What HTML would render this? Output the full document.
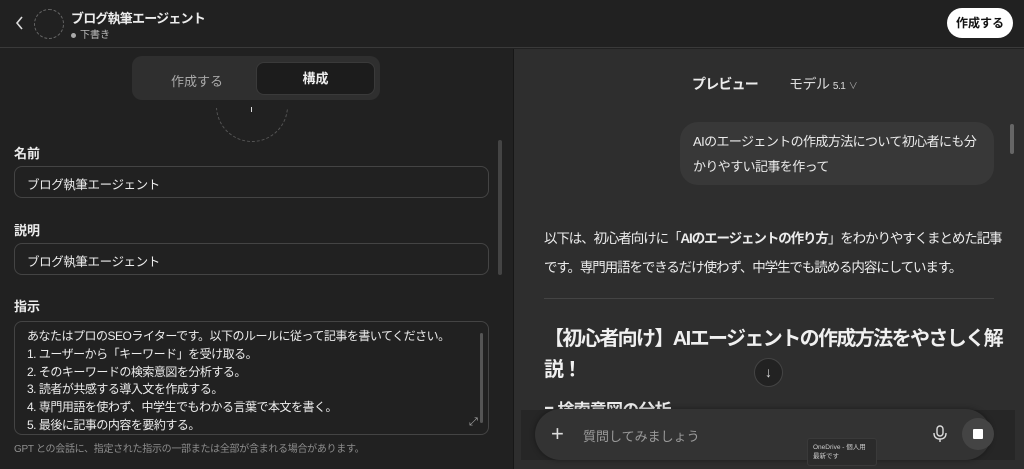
<!DOCTYPE html>
<html><head><meta charset="utf-8"><style>
*{margin:0;padding:0;box-sizing:border-box}
body{width:1024px;height:469px;overflow:hidden;background:#212121;color:#ececec;font-family:"Liberation Sans","Noto Sans CJK JP",sans-serif;position:relative}
.abs{position:absolute}
.hdr{left:0;top:0;width:1024px;height:48px;background:#212121;border-bottom:1px solid #3a3a3a}
.left{left:0;top:49px;width:512px;height:420px;background:#212121}
.right{left:513px;top:49px;width:511px;height:420px;background:#2e2e2e;border-left:1px solid #171717}
.lbl{font-size:13px;font-weight:bold;color:#ececec}
.inp{left:14px;width:475px;height:32px;border:1px solid #444;border-radius:8px;font-size:12.5px;padding:7px 12px;color:#ececec;letter-spacing:-0.4px}
</style></head><body>
<div class="abs hdr"></div>
<svg class="abs" style="left:14px;top:15px" width="12" height="16"><path d="M8 2 L3 8 L8 14" stroke="#ddd" stroke-width="1.6" fill="none"/></svg>
<div class="abs" style="left:34px;top:9px;width:30px;height:30px;border:1px dashed #666;border-radius:50%"></div>
<div class="abs" style="left:71px;top:8px;font-size:13px;font-weight:bold;letter-spacing:-0.8px">ブログ執筆エージェント</div>
<div class="abs" style="left:71px;top:26px;font-size:10px;color:#bbb"><span style="display:inline-block;width:5px;height:5px;background:#aaa;border-radius:50%;margin-right:4px;vertical-align:middle"></span>下書き</div>
<div class="abs" style="left:947px;top:8px;width:66px;height:30px;background:#fff;border-radius:15px;color:#111;font-size:12px;font-weight:bold;text-align:center;line-height:30px">作成する</div>

<div class="abs left"></div>
<div class="abs" style="left:132px;top:56px;width:248px;height:44px;background:#2f2f2f;border-radius:10px"></div>
<div class="abs" style="left:171px;top:71px;font-size:13px;color:#aaa">作成する</div>
<div class="abs" style="left:256px;top:62px;width:119px;height:33px;background:#1c1c1c;border:1px solid #3a3a3a;border-radius:8px;font-size:13px;font-weight:bold;text-align:center;line-height:31px">構成</div>
<div class="abs" style="left:216px;top:70px;width:72px;height:72px;border:1px dashed #555;border-radius:50%;clip-path:inset(38px 0 0 0)"></div>
<div class="abs" style="left:251px;top:107px;width:1px;height:5px;background:#ddd"></div>
<div class="abs" style="left:498px;top:140px;width:4px;height:135px;background:#444;border-radius:2px"></div>
<div class="abs lbl" style="left:14px;top:143px">名前</div>
<div class="abs inp" style="top:166px">ブログ執筆エージェント</div>
<div class="abs lbl" style="left:14px;top:220px">説明</div>
<div class="abs inp" style="top:243px">ブログ執筆エージェント</div>
<div class="abs lbl" style="left:14px;top:296px">指示</div>
<div class="abs" style="left:14px;top:321px;width:475px;height:114px;border:1px solid #444;border-radius:8px;font-size:12px;line-height:17.8px;padding:6px 12px;color:#ececec;letter-spacing:-0.5px">あなたはプロのSEOライターです。以下のルールに従って記事を書いてください。<br>1. ユーザーから「キーワード」を受け取る。<br>2. そのキーワードの検索意図を分析する。<br>3. 読者が共感する導入文を作成する。<br>4. 専門用語を使わず、中学生でもわかる言葉で本文を書く。<br>5. 最後に記事の内容を要約する。</div>
<div class="abs" style="left:480px;top:333px;width:3px;height:90px;background:#555;border-radius:2px"></div>
<div class="abs" style="left:469px;top:416px;font-size:11px;color:#aaa">⤢</div>
<div class="abs" style="left:14px;top:440px;font-size:10px;color:#8e8e8e;letter-spacing:-0.3px">GPT との会話に、指定された指示の一部または全部が含まれる場合があります。</div>

<div class="abs right"></div>
<div class="abs" style="left:692px;top:74px;font-size:14px;font-weight:bold;letter-spacing:-0.8px">プレビュー</div>
<div class="abs" style="left:789px;top:74px;font-size:14px;color:#ddd;letter-spacing:-0.5px">モデル <span style="font-size:10px">5.1</span> <span style="font-size:9px;color:#aaa">∨</span></div>
<div class="abs" style="left:1010px;top:124px;width:4px;height:30px;background:#666;border-radius:2px"></div>
<div class="abs" style="left:680px;top:122px;width:314px;height:63px;background:#383838;border-radius:18px;font-size:13px;line-height:25px;padding:7px 13px;color:#ececec;letter-spacing:-0.6px">AIのエージェントの作成方法について初心者にも分かりやすい記事を作って</div>
<div class="abs" style="left:544px;top:224px;width:462px;font-size:13.5px;line-height:29px;color:#ececec;letter-spacing:-1.1px">以下は、初心者向けに「<b>AIのエージェントの作り方</b>」をわかりやすくまとめた記事です。専門用語をできるだけ使わず、中学生でも読める内容にしています。</div>
<div class="abs" style="left:544px;top:298px;width:450px;height:1px;background:#444"></div>
<div class="abs" style="left:544px;top:324px;width:465px;font-size:20px;font-weight:bold;line-height:31px;color:#f0f0f0;letter-spacing:-1.6px">【初心者向け】AIエージェントの作成方法をやさしく解説！</div>
<div class="abs" style="left:544px;top:396px;font-size:17px;font-weight:bold;color:#eee;height:13px;overflow:hidden;letter-spacing:-0.8px">■ 検索意図の分析</div>
<div class="abs" style="left:754px;top:358px;width:29px;height:29px;border-radius:50%;background:#222;border:1px solid #444;color:#ddd;text-align:center;line-height:27px;font-size:14px">↓</div>
<div class="abs" style="left:521px;top:410px;width:494px;height:50px;background:#262626"></div>
<div class="abs" style="left:535px;top:409px;width:456px;height:51px;background:#333;border-radius:26px;box-shadow:0 0 6px rgba(0,0,0,.4)"></div>
<div class="abs" style="left:551px;top:421px;font-size:22px;color:#ddd;font-weight:300">+</div>
<div class="abs" style="left:583px;top:426px;font-size:13px;color:#9a9a9a">質問してみましょう</div>
<svg class="abs" style="left:932px;top:425px" width="16" height="18"><rect x="5" y="1" width="6" height="10" rx="3" fill="none" stroke="#ddd" stroke-width="1.4"/><path d="M2 8 Q2 14 8 14 Q14 14 14 8 M8 14 V17" stroke="#ddd" stroke-width="1.4" fill="none"/></svg>
<div class="abs" style="left:962px;top:418px;width:32px;height:32px;border-radius:50%;background:#444"></div>
<div class="abs" style="left:973px;top:429px;width:10px;height:10px;background:#fff;border-radius:1px"></div>
<div class="abs" style="left:807px;top:438px;width:70px;height:28px;background:#2b2b2b;border:1px solid #3a3a3a;border-radius:3px;font-size:6.5px;line-height:9px;padding:4px 5px;color:#ccc">OneDrive - 個人用<br>最新です</div>
</body></html>
